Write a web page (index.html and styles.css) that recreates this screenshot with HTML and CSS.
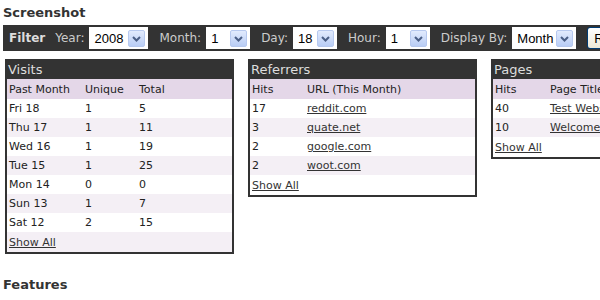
FILE: index.html
```html
<!DOCTYPE html>
<html lang="en">
<head>
<meta charset="UTF-8">
<meta name="viewport" content="width=device-width, initial-scale=1.0">
<title>Stats</title>
<link rel="stylesheet" href="styles.css">
</head>
<body>
<h2 class="section">Screenshot</h2>

<div class="filter">
    <b class="filter-title">Filter</b>

    <span class="label">Year:</span>
    <span class="select select-year">2008<span class="arrow"><svg width="15" height="15" viewBox="0 0 15 15"><polyline points="4,6 7.5,9.5 11,6" fill="none" stroke="#4b5f86" stroke-width="2"/></svg></span></span>

    <span class="label">Month:</span>
    <span class="select select-short">1<span class="arrow"><svg width="15" height="15" viewBox="0 0 15 15"><polyline points="4,6 7.5,9.5 11,6" fill="none" stroke="#4b5f86" stroke-width="2"/></svg></span></span>

    <span class="label">Day:</span>
    <span class="select select-short">18<span class="arrow"><svg width="15" height="15" viewBox="0 0 15 15"><polyline points="4,6 7.5,9.5 11,6" fill="none" stroke="#4b5f86" stroke-width="2"/></svg></span></span>

    <span class="label">Hour:</span>
    <span class="select select-short">1<span class="arrow"><svg width="15" height="15" viewBox="0 0 15 15"><polyline points="4,6 7.5,9.5 11,6" fill="none" stroke="#4b5f86" stroke-width="2"/></svg></span></span>

    <span class="label">Display By:</span>
    <span class="select select-display">Month<span class="arrow"><svg width="15" height="15" viewBox="0 0 15 15"><polyline points="4,6 7.5,9.5 11,6" fill="none" stroke="#4b5f86" stroke-width="2"/></svg></span></span>

    <button class="refresh">Refresh</button>
</div>

<div class="panels">
    <!-- Visits -->
    <div class="box">
        <div class="box-title">Visits</div>
        <table class="stats visits">
            <tr class="head"><td>Past Month</td><td>Unique</td><td>Total</td></tr>
            <tr><td>Fri 18</td><td>1</td><td>5</td></tr>
            <tr class="alt"><td>Thu 17</td><td>1</td><td>11</td></tr>
            <tr><td>Wed 16</td><td>1</td><td>19</td></tr>
            <tr class="alt"><td>Tue 15</td><td>1</td><td>25</td></tr>
            <tr><td>Mon 14</td><td>0</td><td>0</td></tr>
            <tr class="alt"><td>Sun 13</td><td>1</td><td>7</td></tr>
            <tr><td>Sat 12</td><td>2</td><td>15</td></tr>
            <tr class="alt last"><td colspan="3"><a href="#">Show All</a></td></tr>
        </table>
    </div>

    <!-- Referrers -->
    <div class="box">
        <div class="box-title">Referrers</div>
        <table class="stats hits">
            <tr class="head"><td>Hits</td><td>URL (This Month)</td></tr>
            <tr><td>17</td><td><a href="#">reddit.com</a></td></tr>
            <tr class="alt"><td>3</td><td><a href="#">quate.net</a></td></tr>
            <tr><td>2</td><td><a href="#">google.com</a></td></tr>
            <tr class="alt"><td>2</td><td><a href="#">woot.com</a></td></tr>
            <tr class="last"><td colspan="2"><a href="#">Show All</a></td></tr>
        </table>
    </div>

    <!-- Pages -->
    <div class="box">
        <div class="box-title">Pages</div>
        <table class="stats hits">
            <tr class="head"><td>Hits</td><td>Page Title</td></tr>
            <tr><td>40</td><td><a href="#">Test Website</a></td></tr>
            <tr class="alt"><td>10</td><td><a href="#">Welcome Page</a></td></tr>
            <tr class="last"><td colspan="2"><a href="#">Show All</a></td></tr>
        </table>
    </div>
</div>

<h2 class="section features">Features</h2>
</body>
</html>
```

FILE: styles.css
```css
html {
    overflow: hidden;
}
body {
    margin: 0;
    padding: 0 3px;
    background-color: #fff;
    font-family: "DejaVu Sans", Verdana, sans-serif;
    color: #333;
}
.section {
    margin: 0;
    font-size: 13px;
    font-weight: bold;
    line-height: 25px;
    height: 25px;
    color: #333;
}
.features {
    margin-top: 18px;
}

/* filter bar */
.filter {
    display: flex;
    align-items: center;
    width: 720px;
    height: 26px;
    padding-left: 6px;
    background-color: #333;
    color: #ccc;
    font-size: 12px;
    white-space: nowrap;
}
.filter-title {
    color: #ddd;
    margin-right: 10px;
}
.label {
    margin-right: 5px;
}
.select {
    display: inline-flex;
    align-items: center;
    justify-content: space-between;
    box-sizing: border-box;
    height: 22px;
    padding: 0 3px 0 5px;
    margin-right: 11px;
    background-color: #fff;
    color: #000;
    font-family: "Liberation Sans", Arial, sans-serif;
    font-size: 13px;
}
.select-year {
    width: 59px;
}
.select-short {
    width: 44px;
}
.select-display {
    width: 64px;
}
.arrow {
    display: flex;
    align-items: center;
    justify-content: center;
    box-sizing: border-box;
    width: 17px;
    height: 17px;
    border: 1px solid #b7c9ef;
    border-radius: 2px;
    background: linear-gradient(#e2ebfd, #b9cdf5);
}
.refresh {
    height: 22px;
    padding: 0 6px;
    border: 1px solid #003c74;
    border-radius: 3px;
    background: linear-gradient(#fff, #ece9d8);
    font-family: "Liberation Sans", Arial, sans-serif;
    font-size: 13px;
    color: #000;
}

/* stat boxes */
.panels {
    display: flex;
    align-items: flex-start;
    gap: 14px;
    margin-top: 8px;
    padding-left: 2px;
}
.box {
    flex: none;
    width: 229px;
    box-sizing: border-box;
    border: 2px solid #333;
    overflow: hidden;
}
.box-title {
    height: 18px;
    line-height: 18px;
    padding-left: 1px;
    background-color: #333;
    color: #ddd;
    font-size: 13px;
}
.stats {
    width: 100%;
    border-collapse: collapse;
    table-layout: fixed;
    font-size: 11px;
    color: #222;
}
.stats td {
    height: 19px;
    padding: 0 2px;
    white-space: nowrap;
    overflow: hidden;
}
.stats tr {
    background-color: #fff;
}
.stats tr.alt {
    background-color: #f4eff5;
}
.stats tr.head {
    background-color: #e4d7e8;
}
.stats tr.head td,
.stats tr.last td {
    height: 20px;
}
.visits td:nth-child(1) {
    width: 72px;
}
.visits td:nth-child(2) {
    width: 50px;
}
.hits td:nth-child(1) {
    width: 51px;
}
.stats a {
    color: #333;
}
```
